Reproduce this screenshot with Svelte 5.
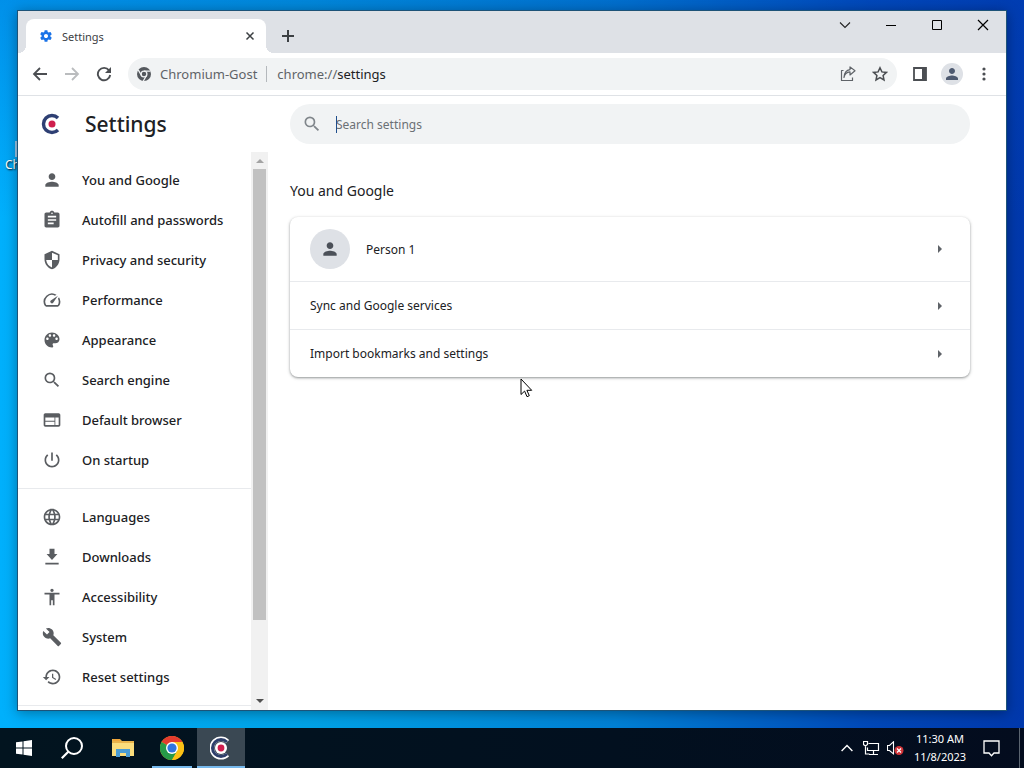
<script>
  const navGroups = [
    [
      { label: 'You and Google', icon: 'person' },
      { label: 'Autofill and passwords', icon: 'assignment' },
      { label: 'Privacy and security', icon: 'security' },
      { label: 'Performance', icon: 'speed' },
      { label: 'Appearance', icon: 'palette' },
      { label: 'Search engine', icon: 'search' },
      { label: 'Default browser', icon: 'web' },
      { label: 'On startup', icon: 'power' }
    ],
    [
      { label: 'Languages', icon: 'language' },
      { label: 'Downloads', icon: 'download' },
      { label: 'Accessibility', icon: 'accessibility' },
      { label: 'System', icon: 'build' },
      { label: 'Reset settings', icon: 'restore' }
    ]
  ];

  const rows = ['Sync and Google services', 'Import bookmarks and settings'];

  const paths = {
    person: 'M12 12c2.21 0 4-1.79 4-4s-1.79-4-4-4-4 1.79-4 4 1.79 4 4 4zm0 2c-2.67 0-8 1.34-8 4v2h16v-2c0-2.66-5.33-4-8-4z',
    assignment: 'M19 3h-4.18C14.4 1.84 13.3 1 12 1c-1.3 0-2.4.84-2.82 2H5c-1.1 0-2 .9-2 2v14c0 1.1.9 2 2 2h14c1.1 0 2-.9 2-2V5c0-1.1-.9-2-2-2zm-7 0c.55 0 1 .45 1 1s-.45 1-1 1-1-.45-1-1 .45-1 1-1zm2 14H7v-2h7v2zm3-4H7v-2h10v2zm0-4H7V7h10v2z',
    security: 'M12 1L3 5v6c0 5.55 3.84 10.74 9 12 5.16-1.26 9-6.45 9-12V5l-9-4zm0 2.19l7 3.11v5.69h-7V3.19zM12 12v8.93c-3.72-1.15-6.47-4.82-7-8.94h7z',
    speed: 'M20.38 8.57l-1.23 1.85a8 8 0 0 1-.22 7.58H5.07A8 8 0 0 1 15.58 6.85l1.85-1.23A10 10 0 0 0 3.35 19a2 2 0 0 0 1.72 1h13.85a2 2 0 0 0 1.74-1 10 10 0 0 0-.27-10.44zM10.59 15.41a2 2 0 0 0 2.83 0l5.66-8.49-8.49 5.66a2 2 0 0 0 0 2.83z',
    palette: 'M12 3c-4.97 0-9 4.03-9 9s4.03 9 9 9c.83 0 1.5-.67 1.5-1.5 0-.39-.15-.74-.39-1.01-.23-.26-.38-.61-.38-.99 0-.83.67-1.5 1.5-1.5H16c2.76 0 5-2.24 5-5 0-4.42-4.03-8-9-8zm-5.5 9c-.83 0-1.5-.67-1.5-1.5S5.67 9 6.5 9 8 9.67 8 10.5 7.33 12 6.5 12zm3-4C8.67 8 8 7.33 8 6.5S8.67 5 9.5 5s1.5.67 1.5 1.5S10.33 8 9.5 8zm5 0c-.83 0-1.5-.67-1.5-1.5S13.67 5 14.5 5s1.5.67 1.5 1.5S15.33 8 14.5 8zm3 4c-.83 0-1.5-.67-1.5-1.5S16.67 9 17.5 9s1.5.67 1.5 1.5-.67 1.5-1.5 1.5z',
    search: 'M15.5 14h-.79l-.28-.27A6.471 6.471 0 0 0 16 9.5 6.5 6.5 0 1 0 9.5 16c1.61 0 3.09-.59 4.23-1.57l.27.28v.79l5 4.99L20.49 19l-4.99-5zm-6 0C7.01 14 5 11.99 5 9.5S7.01 5 9.5 5 14 7.01 14 9.5 11.99 14 9.5 14z',
    web: 'M20 4H4c-1.1 0-1.99.9-1.99 2L2 18c0 1.1.9 2 2 2h16c1.1 0 2-.9 2-2V6c0-1.1-.9-2-2-2zm-5 14H4v-4h11v4zm0-5H4V9h11v4zm5 5h-4V9h4v9z',
    power: 'M13 3h-2v10h2V3zm4.83 2.17l-1.42 1.42C17.99 7.86 19 9.81 19 12c0 3.87-3.13 7-7 7s-7-3.13-7-7c0-2.19 1.01-4.14 2.58-5.42L6.17 5.17C4.23 6.82 3 9.26 3 12c0 4.97 4.03 9 9 9s9-4.03 9-9c0-2.74-1.23-5.18-3.17-6.83z',
    language: 'M11.99 2C6.47 2 2 6.48 2 12s4.47 10 9.99 10C17.52 22 22 17.52 22 12S17.52 2 11.99 2zm6.93 6h-2.95c-.32-1.25-.78-2.45-1.38-3.56 1.84.63 3.37 1.91 4.33 3.56zM12 4.04c.83 1.2 1.48 2.53 1.91 3.96h-3.82c.43-1.43 1.08-2.76 1.91-3.96zM4.26 14C4.1 13.36 4 12.69 4 12s.1-1.36.26-2h3.38c-.08.66-.14 1.32-.14 2s.06 1.34.14 2H4.26zm.82 2h2.95c.32 1.25.78 2.45 1.38 3.56-1.84-.63-3.37-1.9-4.33-3.56zm2.95-8H5.08c.96-1.66 2.49-2.93 4.33-3.56C8.81 5.55 8.35 6.75 8.03 8zM12 19.96c-.83-1.2-1.48-2.53-1.91-3.96h3.82c-.43 1.43-1.08 2.76-1.91 3.96zM14.34 14H9.66c-.09-.66-.16-1.32-.16-2s.07-1.35.16-2h4.68c.09.65.16 1.32.16 2s-.07 1.34-.16 2zm.25 5.56c.6-1.11 1.06-2.31 1.38-3.56h2.95c-.96 1.65-2.49 2.93-4.33 3.56zM16.36 14c.08-.66.14-1.32.14-2s-.06-1.34-.14-2h3.38c.16.64.26 1.31.26 2s-.1 1.36-.26 2h-3.38z',
    download: 'M18.5 8.5H15V2H9v6.5H5.5l6.5 7zM4 19v2h16v-2H4z',
    accessibility: 'M12 2c1.1 0 2 .9 2 2s-.9 2-2 2-2-.9-2-2 .9-2 2-2zm9 7h-6v13h-2v-6h-2v6H9V9H3V7h18v2z',
    build: 'M22.7 19l-9.1-9.1c.9-2.3.4-5-1.5-6.9-2-2-5-2.4-7.4-1.3L9 6 6 9 1.6 4.7C.4 7.1.9 10.1 2.9 12.1c1.9 1.9 4.6 2.4 6.9 1.5l9.1 9.1c.4.4 1 .4 1.4 0l2.3-2.3c.5-.4.5-1.1.1-1.4z',
    restore: 'M13 3c-4.97 0-9 4.03-9 9H1l3.89 3.89.07.14L9 12H6c0-3.87 3.13-7 7-7s7 3.13 7 7-3.13 7-7 7c-1.93 0-3.68-.79-4.94-2.06l-1.42 1.42C8.27 19.99 10.51 21 13 21c4.97 0 9-4.03 9-9s-4.03-9-9-9zm-1 5v5l4.28 2.54.72-1.21-3.5-2.08V8H12z',
    gear: 'M19.43 12.98c.04-.32.07-.64.07-.98s-.03-.66-.07-.98l2.11-1.65c.19-.15.24-.42.12-.64l-2-3.46c-.12-.22-.39-.3-.61-.22l-2.49 1c-.52-.4-1.08-.73-1.69-.98l-.38-2.65C14.46 2.18 14.25 2 14 2h-4c-.25 0-.46.18-.49.42l-.38 2.65c-.61.25-1.17.59-1.69.98l-2.49-1c-.23-.09-.49 0-.61.22l-2 3.46c-.13.22-.07.49.12.64l2.11 1.65c-.04.32-.07.65-.07.98s.03.66.07.98l-2.11 1.65c-.19.15-.24.42-.12.64l2 3.46c.12.22.39.3.61.22l2.49-1c.52.4 1.08.73 1.69.98l.38 2.65c.03.24.24.42.49.42h4c.25 0 .46-.18.49-.42l.38-2.65c.61-.25 1.17-.59 1.69-.98l2.49 1c.23.09.49 0 .61-.22l2-3.46c.12-.22.07-.49-.12-.64l-2.11-1.65zM12 15.5c-1.93 0-3.5-1.57-3.5-3.5s1.57-3.5 3.5-3.5 3.5 1.57 3.5 3.5-1.57 3.5-3.5 3.5z'
  };

  let search = $state('');
  let address = $state('settings');
</script>

{#snippet icon(name, size)}
  <svg class="icon" width={size} height={size} viewBox="0 0 24 24" aria-hidden="true">
    <path d={paths[name]} fill="currentColor" />
  </svg>
{/snippet}

<div class="screen">
  <div class="desktop">
    <div class="shortcut">
      <span class="shortcut-image"></span>
      <span>Chromium</span>
    </div>

    <div class="window">
      <div class="tabstrip">
        <div class="tab">
          <span class="tab-icon">{@render icon('gear', 14)}</span>
          <span class="tab-title">Settings</span>
          <button class="plain" aria-label="Close tab">
            <svg width="10" height="10" viewBox="0 0 10 10"><path d="M1.5 1.5l7 7M8.5 1.5l-7 7" stroke="#3c4043" stroke-width="1.5" /></svg>
          </button>
        </div>
        <button class="plain new-tab" aria-label="New tab">
          <svg width="14" height="14" viewBox="0 0 14 14"><path d="M7 1v12M1 7h12" stroke="#3c4043" stroke-width="2" /></svg>
        </button>
        <div class="window-buttons">
          <button class="plain" aria-label="Search tabs">
            <svg width="12" height="12" viewBox="0 0 12 12"><path d="M1 3.5l5 5 5-5" fill="none" stroke="#222" stroke-width="1.1" /></svg>
          </button>
          <button class="plain" aria-label="Minimize">
            <svg width="12" height="12" viewBox="0 0 12 12"><path d="M1 6.5h10" stroke="#000" /></svg>
          </button>
          <button class="plain" aria-label="Maximize">
            <svg width="12" height="12" viewBox="0 0 12 12"><path d="M1.5 1.5h9v9h-9z" fill="none" stroke="#000" /></svg>
          </button>
          <button class="plain" aria-label="Close">
            <svg width="12" height="12" viewBox="0 0 12 12"><path d="M1 1l10 10M11 1L1 11" stroke="#000" stroke-width="1.2" /></svg>
          </button>
        </div>
      </div>

      <div class="toolbar">
        <button class="plain tool" aria-label="Back">
          <svg width="16" height="16" viewBox="0 0 16 16"><path d="M15 8H2M8 2L2 8l6 6" fill="none" stroke="#4b4e52" stroke-width="1.8" /></svg>
        </button>
        <button class="plain tool" aria-label="Forward">
          <svg width="16" height="16" viewBox="0 0 16 16"><path d="M1 8h13M8 2l6 6-6 6" fill="none" stroke="#babcbe" stroke-width="1.8" /></svg>
        </button>
        <button class="plain tool" aria-label="Reload">
          <svg width="16" height="16" viewBox="0 0 16 16">
            <path d="M13 4.3A6.2 6.2 0 1 0 14.2 9" fill="none" stroke="#4b4e52" stroke-width="1.9" />
            <path d="M15 1v6H9z" fill="#4b4e52" />
          </svg>
        </button>
        <div class="omnibox">
          <svg width="14" height="14" viewBox="0 0 14 14" aria-hidden="true">
            <circle cx="7" cy="7" r="7" fill="#55595e" />
            <circle cx="7" cy="7" r="2.9" fill="none" stroke="#f1f3f4" stroke-width="1.3" />
            <path d="M7 4.1h6.5M4.5 8.5L1.2 2.9M9.5 8.5L6.3 14" stroke="#f1f3f4" stroke-width="1.3" />
          </svg>
          <span class="origin">Chromium-Gost</span>
          <label class="address">
            <span>chrome://</span>
            <input type="text" aria-label="Address" bind:value={address} />
          </label>
          <button class="plain tool" aria-label="Share this page">
            <svg width="16" height="16" viewBox="0 0 16 16">
              <path d="M3.5 4.5h-2v10h11v-3M4 11.5c.6-3.7 2.6-5.5 6-5.7V9l5-4.2L10 .9v2.7C6.3 4 4.3 6.8 4 11.5z" fill="none" stroke="#5f6368" stroke-width="1.2" stroke-linejoin="round" />
            </svg>
          </button>
          <button class="plain tool" aria-label="Bookmark this tab">
            <svg width="16" height="16" viewBox="0 0 16 16">
              <path d="M8 1.8l1.9 4.1 4.5.5-3.3 3.1.9 4.5L8 11.7 4 14l.9-4.5L1.6 6.4l4.5-.5z" fill="none" stroke="#4b4e52" stroke-width="1.5" />
            </svg>
          </button>
        </div>
        <button class="plain tool" aria-label="Side panel">
          <svg width="14" height="14" viewBox="0 0 14 14"><path d="M1 1h12v12H1z" fill="none" stroke="#4b4e52" stroke-width="1.8" /><path d="M9 1h4v12H9z" fill="#4b4e52" /></svg>
        </button>
        <button class="plain profile" aria-label="Profile">{@render icon('person', 18)}</button>
        <button class="plain tool" aria-label="Menu">
          <svg width="4" height="14" viewBox="0 0 4 14" fill="#4b4e52"><circle cx="2" cy="2" r="1.6" /><circle cx="2" cy="7" r="1.6" /><circle cx="2" cy="12" r="1.6" /></svg>
        </button>
      </div>

      <div class="page">
        <aside>
          <header>
            <svg width="20" height="22" viewBox="0 0 20 22" aria-hidden="true">
              <path d="M17 5A8.5 8.5 0 1 0 17 17" fill="none" stroke="#2e3f73" stroke-width="3.4" />
              <circle cx="11" cy="11" r="3.5" fill="#cf1f4e" />
            </svg>
            <h1>Settings</h1>
          </header>
          <div class="menu">
            <nav>
              {#each navGroups as group}
                <ul>
                  {#each group as item}
                    <li><a href="#{item.icon}">{@render icon(item.icon, 20)}{item.label}</a></li>
                  {/each}
                </ul>
              {/each}
            </nav>
            <div class="scrollbar" aria-hidden="true">
              <svg width="8" height="4" viewBox="0 0 8 4"><path d="M0 4l4-4 4 4z" fill="#a3a3a3" /></svg>
              <div class="track"><div class="thumb"></div></div>
              <svg width="8" height="4" viewBox="0 0 8 4"><path d="M0 0l4 4 4-4z" fill="#505050" /></svg>
            </div>
          </div>
        </aside>

        <main>
          <label class="search">
            {@render icon('search', 20)}
            <span class="caret"></span>
            <input type="text" aria-label="Search settings" placeholder="Search settings" bind:value={search} />
          </label>
          <h2>You and Google</h2>
          <div class="card">
            <button class="row person">
              <span class="avatar">{@render icon('person', 20)}</span>
              <span class="row-label">Person 1</span>
              <span class="arrow"></span>
            </button>
            {#each rows as row}
              <button class="row">
                <span class="row-label">{row}</span>
                <span class="arrow"></span>
              </button>
            {/each}
          </div>
        </main>
      </div>
    </div>

    <svg class="cursor" width="13" height="20" viewBox="0 0 13 20" aria-hidden="true">
      <path d="M1 1v15.5l3.6-3.4 2.4 5.6 2.3-1-2.4-5.4h4.8z" fill="#fff" stroke="#000" />
    </svg>
  </div>

  <div class="taskbar">
    <button class="plain task" aria-label="Start">
      <svg width="16" height="16" viewBox="0 0 16 16" fill="#fff"><path d="M0 2.3l6.5-.9v6.1H0zM7.5 1.2L16 0v7.5H7.5zM0 8.5h6.5v6.1L0 13.7zM7.5 8.5H16V16l-8.5-1.2z" /></svg>
    </button>
    <button class="plain task" aria-label="Search">
      <svg width="22" height="22" viewBox="0 0 22 22"><circle cx="13" cy="9" r="8" fill="none" stroke="#fff" stroke-width="2" /><path d="M7.3 14.7L.8 21.2" stroke="#fff" stroke-width="2.2" /></svg>
    </button>
    <div class="apps">
      <button class="plain task" aria-label="File Explorer">
        <svg width="22" height="18" viewBox="0 0 22 18">
          <path d="M0 0h8l2 2h12v15H0z" fill="#e9b44c" />
          <path d="M0 4h22v13H0z" fill="#fbdd7c" />
          <path d="M1 0h7v2H1z" fill="#f0a63a" />
          <path d="M4 18v-8h14v8h-4v-4H8v4z" fill="#4b9cd3" />
        </svg>
      </button>
      <button class="plain task running" aria-label="Google Chrome">
        <svg width="24" height="24" viewBox="0 0 24 24">
          <circle cx="12" cy="12" r="12" fill="#fbc116" />
          <path d="M12 12L1.6 6A12 12 0 0 1 22.4 6z" fill="#e33b2e" />
          <path d="M12 12L1.6 6A12 12 0 0 0 12 24l5.2-9z" fill="#269a48" />
          <path d="M12 6h10.4A12 12 0 0 1 12 24l5.2-9z" fill="#fbc116" />
          <circle cx="12" cy="12" r="6" fill="#fff" />
          <circle cx="12" cy="12" r="4.6" fill="#2f75e0" />
        </svg>
      </button>
      <button class="plain task running active" aria-label="Chromium-Gost">
        <svg width="22" height="24" viewBox="0 0 22 24">
          <path d="M17.5 5.5A9.2 9.2 0 1 0 17.5 18.5" fill="none" stroke="#fff" stroke-width="4.6" />
          <circle cx="11" cy="12" r="6" fill="#fff" />
          <path d="M17 6A8.5 8.5 0 1 0 17 18" fill="none" stroke="#2e3f6b" stroke-width="3" />
          <circle cx="11" cy="12" r="3.4" fill="#cf1f4e" />
        </svg>
      </button>
    </div>
    <div class="tray">
      <button class="plain" aria-label="Show hidden icons">
        <svg width="12" height="8" viewBox="0 0 12 8"><path d="M.6 7L6 1.6 11.4 7" fill="none" stroke="#fff" stroke-width="1.4" /></svg>
      </button>
      <button class="plain" aria-label="Network">
        <svg width="17" height="14" viewBox="0 0 17 14"><path d="M5.5 2.5h10v7h-11v-3M10.5 9.5v4M6 13.5h9M.5.5h4v3l-2 1.5-2-1.5zM2.5 5v8h4" fill="none" stroke="#fff" stroke-width="1.2" /></svg>
      </button>
      <button class="plain" aria-label="Volume">
        <svg width="17" height="14" viewBox="0 0 17 14">
          <path d="M.5 4.5h2L6.5.8v12L2.5 9.5h-2z" fill="none" stroke="#fff" stroke-width="1.1" />
          <circle cx="12" cy="9.5" r="4.5" fill="#d13438" />
          <path d="M10 7.5l4 4M14 7.5l-4 4" stroke="#fff" stroke-width="1.2" />
        </svg>
      </button>
      <div class="clock">
        <span>11:30 AM</span>
        <span>11/8/2023</span>
      </div>
      <button class="plain" aria-label="Notifications">
        <svg width="17" height="17" viewBox="0 0 17 17"><path d="M1 1h15v12h-5l-2.500 2.800L6 13H1z" fill="none" stroke="#fff" stroke-width="1.3" /></svg>
      </button>
      <div class="show-desktop"></div>
    </div>
  </div>
</div>

<style>
  :global(body) {
    margin: 0;
  }

  .screen {
    display: flex;
    flex-direction: column;
    height: 100vh;
    overflow: hidden;
    font-family: "Noto Sans", "Open Sans", sans-serif;
    font-size: 12px;
    color: #202124;
  }

  .screen * {
    box-sizing: border-box;
  }

  button, input {
    font: inherit;
    color: inherit;
  }

  .plain {
    display: flex;
    align-items: center;
    justify-content: center;
    padding: 0;
    border: 0;
    background: none;
  }

  .icon {
    flex: none;
  }

  .desktop {
    position: relative;
    flex: 1;
    min-height: 0;
    padding: 10px 17px 17px;
    background:
      linear-gradient(180deg, rgba(0, 70, 190, 0.3), rgba(0, 70, 190, 0) 30%),
      linear-gradient(90deg, #00b0fc, #00a2e6 30%, #0080d4 60%, #0048b8 85%, #0038ac);
  }

  .shortcut {
    position: absolute;
    top: 141px;
    left: 5px;
    display: flex;
    flex-direction: column;
    line-height: 16px;
    color: #fff;
    text-shadow: 1px 1px 2px #000;
  }

  .shortcut-image {
    width: 16px;
    height: 16px;
    margin-left: 10px;
    background: #9cc8e8;
  }

  .window {
    position: relative;
    display: flex;
    flex-direction: column;
    height: 100%;
    border: 1px solid #1d5378;
    background: #fff;
    box-shadow: 0 2px 12px rgba(0, 0, 0, 0.35);
  }

  .tabstrip {
    display: flex;
    flex: none;
    height: 42px;
    padding: 8px 0 0 8px;
    background: #dee1e6;
  }

  .tab {
    position: relative;
    display: flex;
    align-items: center;
    width: 240px;
    padding: 0 11px 0 13px;
    border-radius: 8px 8px 0 0;
    background: #fff;
    font-size: 11px;
  }

  .tab::before, .tab::after {
    content: "";
    position: absolute;
    bottom: 0;
    width: 8px;
    height: 8px;
  }

  .tab::before {
    left: -8px;
    background: radial-gradient(circle at 0 0, #dee1e6 8px, #fff 8px);
  }

  .tab::after {
    right: -8px;
    background: radial-gradient(circle at 100% 0, #dee1e6 8px, #fff 8px);
  }

  .tab-icon {
    display: flex;
    color: #1a73e8;
  }

  .tab-title {
    flex: 1;
    margin-left: 9px;
    color: #3c4043;
  }

  .new-tab {
    width: 28px;
    margin-left: 8px;
  }

  .window-buttons {
    display: flex;
    height: 12px;
    margin-left: auto;
  }

  .window-buttons button {
    width: 46px;
  }

  .toolbar {
    display: flex;
    flex: none;
    align-items: center;
    height: 43px;
    padding: 0 10px;
    border-bottom: 1px solid #dfe2e6;
  }

  .tool {
    flex: none;
    width: 24px;
    height: 24px;
    margin-right: 8px;
  }

  .toolbar > .tool:last-child {
    margin: 0;
  }

  .omnibox {
    display: flex;
    flex: 1;
    align-items: center;
    min-width: 0;
    height: 32px;
    margin: 0 11px 0 4px;
    padding-left: 9px;
    border-radius: 16px;
    background: #f1f3f4;
    font-size: 13px;
    color: #5f6368;
  }

  .omnibox .tool:last-child {
    margin-right: 5px;
  }

  .origin {
    margin-left: 9px;
    padding-right: 9px;
    border-right: 1px solid #b4b8bc;
    line-height: 16px;
    white-space: nowrap;
  }

  .address {
    display: flex;
    flex: 1;
    margin-left: 10px;
  }

  .address input {
    flex: 1;
    width: 0;
    padding: 0;
    border: 0;
    outline: 0;
    background: none;
    color: #202124;
  }

  .profile {
    flex: none;
    width: 22px;
    height: 22px;
    margin: 0 9px 0 1px;
    border-radius: 50%;
    background: #dee1e6;
    color: #4e5a70;
  }

  .page {
    display: flex;
    flex: 1;
    min-height: 0;
  }

  aside {
    display: flex;
    flex: none;
    flex-direction: column;
    width: 250px;
  }

  header {
    display: flex;
    flex: none;
    align-items: center;
    height: 56px;
    padding-left: 23px;
  }

  h1 {
    margin: 0 0 0 24px;
    font-size: 21px;
    font-weight: 500;
  }

  .menu {
    display: flex;
    flex: 1;
    min-height: 0;
  }

  nav {
    flex: 1;
    overflow: hidden;
  }

  ul {
    margin: 0;
    padding: 8px 0;
    border-bottom: 1px solid #e8eaed;
    list-style: none;
  }

  nav a {
    display: flex;
    align-items: center;
    gap: 20px;
    height: 40px;
    padding-left: 24px;
    font-size: 13px;
    font-weight: 500;
    color: #202124;
    text-decoration: none;
    white-space: nowrap;
  }

  nav .icon {
    color: #5a5d61;
  }

  .scrollbar {
    display: flex;
    flex-direction: column;
    align-items: center;
    justify-content: space-between;
    width: 17px;
    padding: 7px 0;
    background: #f1f1f1;
  }

  .track {
    flex: 1;
    width: 13px;
    margin: 6px 0;
  }

  .thumb {
    height: 86%;
    background: #c1c1c1;
  }

  main {
    flex: 1;
    min-width: 0;
    padding: 8px 36px 0 22px;
  }

  .search {
    position: relative;
    display: flex;
    align-items: center;
    height: 40px;
    padding: 0 20px 0 12px;
    border-radius: 20px;
    background: #f1f3f4;
    color: #80868b;
  }

  .caret {
    position: absolute;
    left: 46px;
    width: 1px;
    height: 17px;
    background: #1f4e8c;
  }

  .search input {
    flex: 1;
    min-width: 0;
    margin-left: 14px;
    padding: 0;
    border: 0;
    outline: 0;
    background: none;
    color: #202124;
  }

  .search input::placeholder {
    color: #6b7075;
    opacity: 1;
  }

  h2 {
    margin: 37px 0 16px;
    font-size: 14px;
    font-weight: 400;
    line-height: 20px;
  }

  .card {
    border-radius: 8px;
    background: #fff;
    box-shadow: 0 1px 2px rgba(60, 64, 67, 0.4), 0 1px 3px 1px rgba(60, 64, 67, 0.15);
  }

  .row {
    display: flex;
    align-items: center;
    width: 100%;
    height: 48px;
    padding: 0 28px 0 20px;
    border: 0;
    border-top: 1px solid #e8eaed;
    background: none;
    text-align: left;
  }

  .person {
    height: 64px;
    border-top: 0;
  }

  .avatar {
    display: flex;
    align-items: center;
    justify-content: center;
    width: 40px;
    height: 40px;
    margin-right: 16px;
    border-radius: 50%;
    background: #dee1e6;
    color: #4b5058;
  }

  .row-label {
    flex: 1;
  }

  .arrow {
    border: 4px solid transparent;
    border-right-width: 0;
    border-left: 4px solid #5f6368;
  }

  .cursor {
    position: absolute;
    left: 520px;
    top: 378px;
  }

  .taskbar {
    display: flex;
    flex: none;
    height: 40px;
    background: linear-gradient(90deg, #02141f, #02101f 60%, #030c1e);
    color: #fff;
  }

  .task {
    width: 48px;
  }

  .apps {
    display: flex;
    gap: 1px;
    margin-left: 3px;
  }

  .running {
    position: relative;
  }

  .running::after {
    content: "";
    position: absolute;
    right: 4px;
    bottom: 0;
    left: 4px;
    height: 2px;
    background: #76b9ed;
  }

  .active {
    background: #3a4853;
  }

  .active::after {
    right: 0;
    left: 0;
  }

  .tray {
    display: flex;
    align-items: center;
    margin-left: auto;
  }

  .tray button {
    width: 24px;
    height: 40px;
  }

  .clock {
    display: flex;
    flex-direction: column;
    align-items: center;
    width: 66px;
    font-size: 11px;
    line-height: 18px;
  }

  .clock + button {
    margin: 0 16px 0 6px;
  }

  .show-desktop {
    width: 5px;
    height: 40px;
    border-left: 1px solid #5a6470;
  }
</style>
